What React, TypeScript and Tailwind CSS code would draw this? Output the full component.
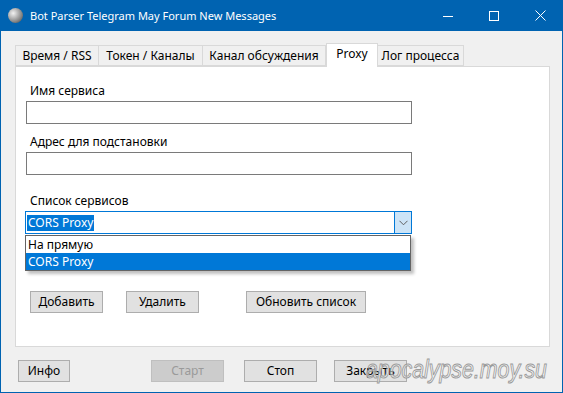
import React from 'react';

const font = { fontFamily: '"Noto Sans", "Segoe UI", sans-serif' };

const Tab = ({ label, active, w }: { label: string; active?: boolean; w: string }) =>
  active ? (
    <div className={`${w} h-[24px] -mt-[2px] -mb-[1px] z-10 bg-white border border-b-0 border-[#d9d9d9] flex items-center justify-center text-[12px] text-black`}>
      <span className="-mt-[3px]">{label}</span>
    </div>
  ) : (
    <div className={`${w} h-[21px] bg-[#f0f0f0] border border-[#d9d9d9] -ml-px first:ml-0 flex items-center justify-center text-[12px] text-black`}>
      {label}
    </div>
  );

const Btn = ({ label, w, disabled }: { label: string; w: string; disabled?: boolean }) => (
  <div
    className={`${w} h-[22px] flex items-center justify-center text-[12px] border ${
      disabled ? 'bg-[#cccccc] border-[#bfbfbf] text-[#9a9a9a]' : 'bg-[#e1e1e1] border-[#adadad] text-black'
    }`}
  >
    {label}
  </div>
);

const App: React.FC = () => {
  return (
    <div style={font} className="w-[563px] h-[393px] flex flex-col bg-[#0063b1] overflow-hidden select-none">
      {/* Title bar */}
      <div className="h-[31px] shrink-0 flex items-center text-white">
        <div className="ml-[8px] w-[15px] h-[15px] rounded-full bg-[radial-gradient(circle_at_35%_35%,#f2f2f2,#8a8a8a_60%,#3a3a3a)]" />
        <span className="ml-[7px] text-[11px] leading-none">Bot Parser Telegram May Forum New Messages</span>
        <div className="ml-auto flex items-center h-full">
          <div className="w-[46px] h-full flex items-center justify-center">
            <svg width="10" height="10" viewBox="0 0 10 10"><path d="M0 5.5h10" stroke="#fff" strokeWidth="1" /></svg>
          </div>
          <div className="w-[46px] h-full flex items-center justify-center">
            <svg width="10" height="10" viewBox="0 0 10 10"><rect x="0.5" y="0.5" width="9" height="9" fill="none" stroke="#fff" strokeWidth="1" /></svg>
          </div>
          <div className="w-[46px] h-full flex items-center justify-center">
            <svg width="11" height="11" viewBox="0 0 11 11"><path d="M0.5 0.5l10 10M10.5 0.5l-10 10" stroke="#fff" strokeWidth="1" /></svg>
          </div>
        </div>
      </div>

      {/* Client area */}
      <div className="flex-1 mx-px mb-px bg-[#f0f0f0] flex flex-col relative">
        {/* Tabs */}
        <div className="mt-[14px] ml-[14px] flex items-end">
          <Tab label="Время / RSS" w="w-[84px]" />
          <Tab label="Токен / Каналы" w="w-[105px]" />
          <Tab label="Канал обсуждения" w="w-[124px]" />
          <Tab label="Proxy" w="w-[52px]" active />
          <Tab label="Лог процесса" w="w-[87px]" />
        </div>

        {/* Panel */}
        <div className="ml-[14px] w-[535px] h-[281px] bg-white border border-[#d9d9d9] relative">
          <div className="pl-[10px] pt-[16px]">
            <div className="pl-[4px] h-[16px] leading-[16px] text-[12px] mb-[2px]">Имя сервиса</div>
            <div className="w-[386px] h-[23px] border border-[#7a7a7a] bg-white" />
            <div className="pl-[4px] mt-[10px] h-[16px] leading-[16px] text-[12px] mb-[2px]">Адрес для подстановки</div>
            <div className="w-[386px] h-[23px] border border-[#7a7a7a] bg-white" />
            <div className="pl-[4px] mt-[18px] h-[16px] leading-[16px] text-[12px] mb-[2px]">Список сервисов</div>
            <div className="relative w-[386px]">
              <div className="-ml-px h-[23px] border border-[#0078d7] bg-white flex items-center">
                <span className="ml-px bg-[#0078d7] text-white text-[12px] leading-[16px] px-px">CORS Proxy</span>
                <div className="ml-auto w-[17px] h-full bg-[#cce4f7] border-l border-[#0078d7] flex items-center justify-center">
                  <svg width="9" height="6" viewBox="0 0 9 6"><path d="M0.5 0.8l4 4 4-4" fill="none" stroke="#606060" strokeWidth="1" /></svg>
                </div>
              </div>
              {/* dropdown list */}
              <div className="absolute left-[-1px] top-[24px] w-[386px] border border-[#646464] bg-white text-[12px] shadow-[3px_3px_3px_rgba(0,0,0,0.25)] z-20">
                <div className="h-[17px] leading-[17px] pl-[2px]">На прямую</div>
                <div className="h-[17px] leading-[17px] pl-[2px] bg-[#0078d7] text-white">CORS Proxy</div>
              </div>
            </div>
            <div className="mt-[57px] pl-[4px] flex">
              <Btn label="Добавить" w="w-[73px]" />
              <div className="ml-[23px]"><Btn label="Удалить" w="w-[73px]" /></div>
              <div className="ml-[47px]"><Btn label="Обновить список" w="w-[120px]" /></div>
            </div>
          </div>
        </div>

        {/* Bottom buttons */}
        <div className="mt-[13px] ml-[17px] flex">
          <Btn label="Инфо" w="w-[52px]" />
          <div className="ml-[81px]"><Btn label="Старт" w="w-[73px]" disabled /></div>
          <div className="ml-[20px]"><Btn label="Стоп" w="w-[73px]" /></div>
          <div className="ml-[17px]"><Btn label="Закрыть" w="w-[73px]" /></div>
        </div>

        {/* Watermark */}
        <div
          className="absolute left-[365px] top-[325px] text-[26px] italic leading-none whitespace-nowrap origin-left scale-x-[0.82] text-[rgba(255,255,255,0.55)] [-webkit-text-stroke:1px_#9a9a9a] pointer-events-none"
          style={{ fontFamily: '"Liberation Sans", Arial, sans-serif' }}
        >
          apocalypse.moy.su
        </div>
      </div>
    </div>
  );
};

export default App;
